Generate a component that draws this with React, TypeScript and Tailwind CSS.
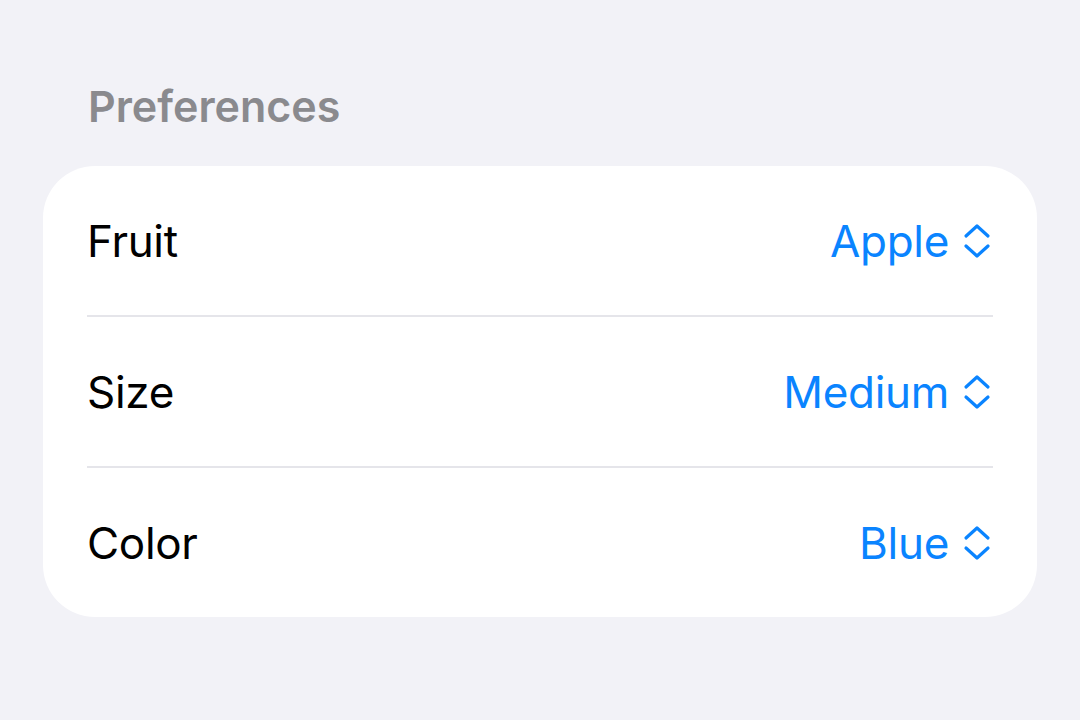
import React from 'react';

const rows = [
  { label: 'Fruit', value: 'Apple' },
  { label: 'Size', value: 'Medium' },
  { label: 'Color', value: 'Blue' },
];

const UpDown = () => (
  <svg width="28" height="36" viewBox="0 0 28 36" fill="none" stroke="#0a84ff" strokeWidth="3.2" strokeLinecap="round" strokeLinejoin="round">
    <path d="M3 13 L14 3 L25 13" />
    <path d="M3 23 L14 33 L25 23" />
  </svg>
);

const App: React.FC = () => {
  return (
    <div className="w-[1080px] h-[720px] bg-[#f2f2f7] font-['Inter',sans-serif] pt-[82px] px-[43px]">
      <div className="pl-[45px] text-[43px] font-semibold text-[#8a8a8e] leading-[48px] tracking-[0px]">Preferences</div>
      <div className="mt-[36px] bg-white rounded-[52px] pl-[44px] pr-[46px]">
        {rows.map((row, i) => (
          <div key={row.label}>
            {i > 0 && <div className="h-[2px] bg-[#e5e5ea] mr-[-2px]" />}
            <div className="flex items-center justify-between h-[149px]">
              <span className="text-[44px] text-black tracking-[-0.3px]">{row.label}</span>
              <span className="flex items-center gap-[14px] text-[44px] text-[#0a84ff] tracking-[-0.3px]">
                {row.value}
                <UpDown />
              </span>
            </div>
          </div>
        ))}
      </div>
    </div>
  );
};

export default App;
